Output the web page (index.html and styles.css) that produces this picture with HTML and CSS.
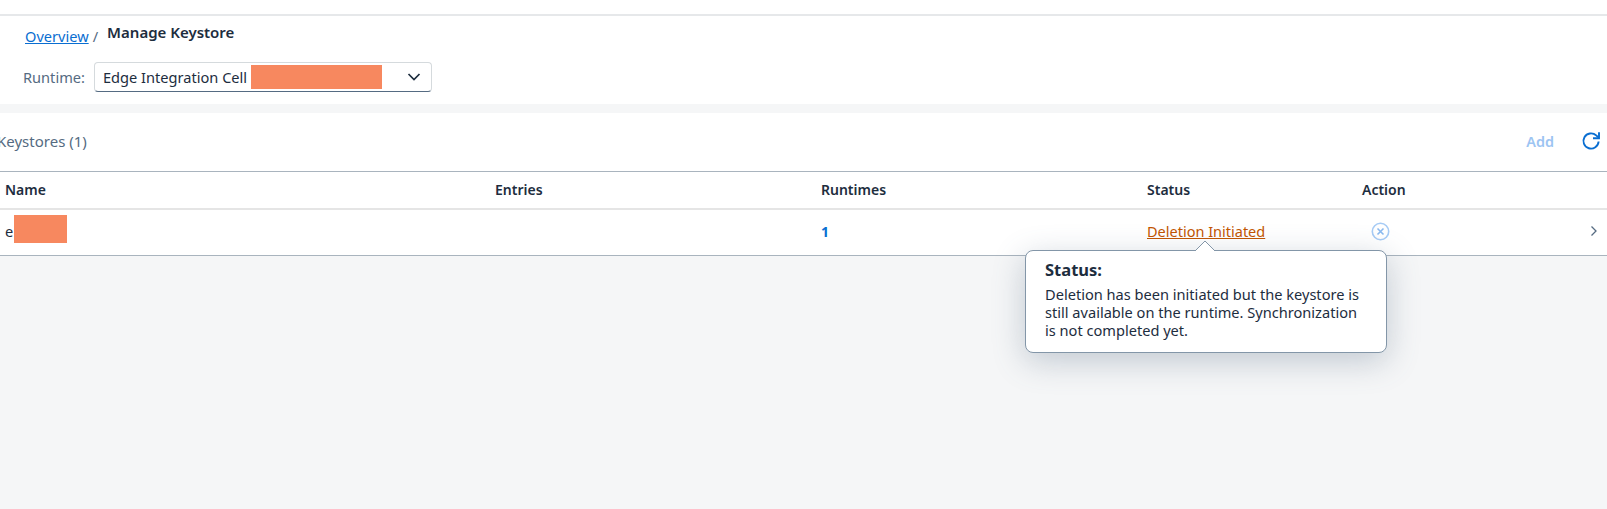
FILE: index.html
```html
<!DOCTYPE html>
<html lang="en">
<head>
<meta charset="utf-8">
<title>Manage Keystore</title>
<link rel="stylesheet" href="styles.css">
</head>
<body>
<div class="shell"></div>
<header class="head">
  <nav class="crumbs"><a class="link" href="#">Overview</a><span class="sep">/</span><span class="current">Manage Keystore</span></nav>
  <div class="runtime">
    <span class="label">Runtime:</span>
    <div class="select"><span>Edge Integration Cell</span><span class="redact redact-sel"></span>
      <svg class="chev" width="14" height="10" viewBox="0 0 14 10"><path d="M1.500 2l5.500 5.500L12.500 2" fill="none" stroke="#1d2d3e" stroke-width="1.700"/></svg>
    </div>
  </div>
</header>
<main class="panel">
  <div class="toolbar">
    <span class="title">Keystores (1)</span>
    <span class="add">Add</span>
    <svg class="refresh" width="20" height="20" viewBox="0 0 20 20"><path d="M17.600 10.500a7.600 7.600 0 1 1-2.400-6.100l2 1.800" fill="none" stroke="#0a6ed1" stroke-width="1.900"/><path d="M18 1.200v6h-6" fill="none" stroke="#0a6ed1" stroke-width="1.900"/></svg>
  </div>
  <div class="row row-head">
    <div>Name</div><div>Entries</div><div>Runtimes</div><div>Status</div><div>Action</div><div></div>
  </div>
  <div class="row row-body">
    <div class="name"><span>e</span><span class="redact redact-name"></span></div>
    <div></div>
    <div class="count">1</div>
    <div><a class="warn" href="#">Deletion Initiated</a></div>
    <div><svg class="del" width="19" height="19" viewBox="0 0 19 19"><circle cx="9.500" cy="9.500" r="8.200" fill="none" stroke="#a6cbf5" stroke-width="1.600"/><path d="M6.500 6.500l6 6M12.500 6.500l-6 6" stroke="#8ab9ef" stroke-width="1.600"/></svg></div>
    <div class="go"><svg width="8" height="12" viewBox="0 0 8 12"><path d="M1.500 1.500L6 6l-4.500 4.500" fill="none" stroke="#556b82" stroke-width="1.300"/></svg></div>
  </div>
</main>
<aside class="pop">
  <svg class="arrow" width="20" height="10" viewBox="0 0 20 10"><path d="M0 10L10 0l10 10" fill="#fff" stroke="#8396a8"/></svg>
  <h2>Status:</h2>
  <p>Deletion has been initiated but the keystore is still available on the runtime. Synchronization is not completed yet.</p>
</aside>
</body>
</html>
```
FILE: styles.css
```css
* { box-sizing: border-box; }
html, body { margin: 0; height: 100%; }
body {
  background: #f5f6f7;
  color: #1d2d3e;
  font-family: "Noto Sans", "Liberation Sans", sans-serif;
  font-size: 14.6px;
  overflow: hidden;
  position: relative;
}
.shell { height: 16px; background: #fff; border-bottom: 2px solid #e6e8ea; }
.head { height: 88px; background: #fff; padding: 6px 25px 0; }
.crumbs { display: flex; height: 30px; align-items: flex-start; }
.link { color: #0a6ed1; margin-top: 4px; }
.sep { color: #556b82; margin: 4px 0 0 4px; }
.current { font-weight: 600; font-size: 15px; margin-left: 9px; }
.runtime { display: flex; align-items: center; margin-top: 10px; }
.label { color: #556b82; width: 71px; margin-left: -2px; }
.select {
  width: 338px; height: 30px; display: flex; align-items: center;
  padding: 0 0 0 8px; background: #fff;
  border: 1px solid #d5dadd; border-bottom: 1px solid #556b82; border-radius: 4px;
}
.redact { display: block; background: #f7885f; }
.redact-sel { width: 131px; height: 24px; margin-left: 4px; }
.chev { margin-left: auto; margin-right: 10px; }
.panel { margin-top: 9px; background: #fff; height: 143px; }
.toolbar { height: 59px; padding-bottom: 2px; display: flex; align-items: center; border-bottom: 1px solid #a9b4be; }
.title { color: #556b82; font-size: 15px; margin-left: -3px; }
.add { margin-left: auto; color: #9cc4f2; font-weight: 600; font-size: 14.4px; }
.refresh { margin: 0 6px 0 27px; }
.row { display: grid; grid-template-columns: 490px 326px 326px 215px 225px 25px; padding-left: 5px; align-items: center; }
.row-head { height: 38px; padding-bottom: 2px; font-weight: 600; font-size: 14px; border-bottom: 2px solid #e5e5e5; }
.row-body { height: 46px; border-bottom: 1px solid #a9b4be; padding-bottom: 3px; }
.name { display: flex; align-items: center; }
.redact-name { width: 53px; height: 28px; margin-top: -4px; margin-left: 1px; }
.count { color: #0a6ed1; font-weight: 700; font-size: 14px; }
.warn { color: #c35500; font-size: 14.5px; }
.del { display: block; margin-left: 9px; }
.go { display: flex; margin-left: 3px; }
.pop {
  position: absolute; left: 1025px; top: 250px; width: 362px; height: 103px;
  padding: 8px 19px; background: #fff;
  border: 1px solid #8396a8; border-radius: 8px;
  box-shadow: 0 8px 32px rgba(85,107,130,.32);
}
.arrow { position: absolute; left: 169px; top: -10px; }
.pop h2 { margin: 0 0 4px; font-size: 16.5px; font-weight: 700; line-height: 22px; }
.pop p { margin: 0; line-height: 18px; }
```
